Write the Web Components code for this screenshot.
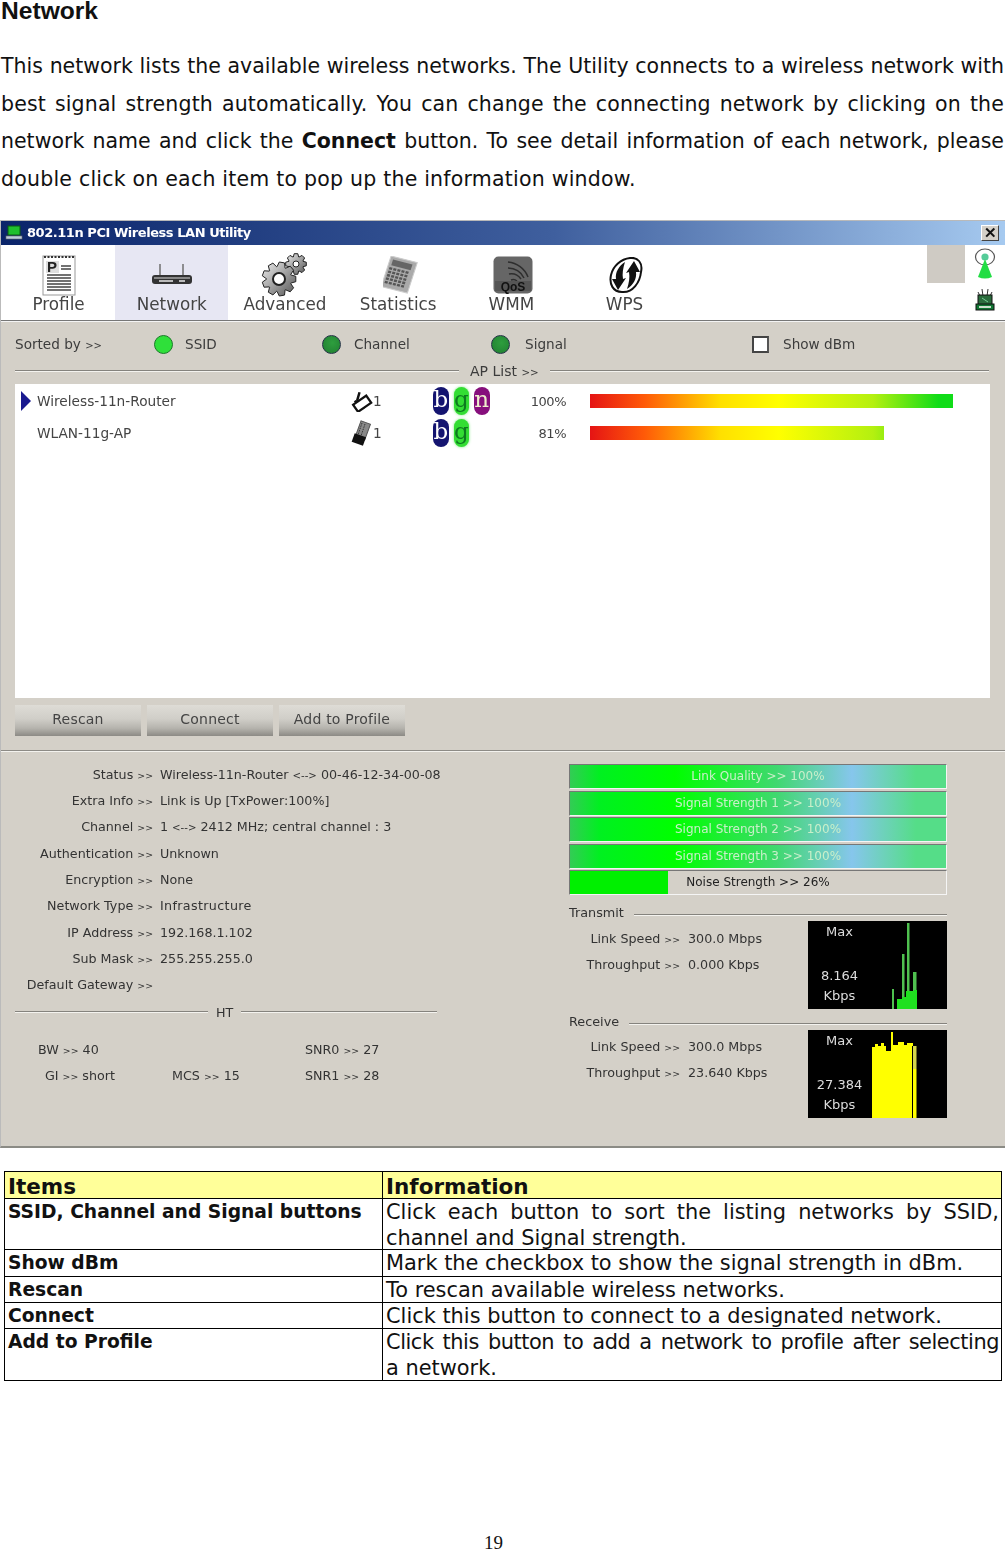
<!DOCTYPE html>
<html lang="en"><head><meta charset="utf-8"><title>Network</title>
<style>html,body{margin:0;padding:0;background:#fff}.g{font-size:.74em}.sm{font-size:.8em}</style>
</head><body>
<script>
const gear=(cx,cy,n,r1,r2)=>{let p=[];for(let i=0;i<n;i++){const a=i/n*Math.PI*2,s=Math.PI/n;
[[a-s*.95,r1],[a-s*.45,r2],[a+s*.45,r2],[a+s*.95,r1]].forEach(([t,r])=>p.push((cx+r*Math.cos(t)).toFixed(1)+','+(cy+r*Math.sin(t)).toFixed(1)));}return p.join(' ');};
const keys=()=>{let s='';for(let r=0;r<5;r++)for(let c=0;c<5;c++)s+=`<rect x="${6+c*4.2}" y="${14+r*3.6}" width="3" height="2.4" fill="#555"/>`;return s;};
const ICONS={
profile:`<svg width="34" height="42" viewBox="0 0 34 42"><rect x="1" y="2" width="32" height="39" fill="#fff" stroke="#999"/><path d="M2 3H32" stroke="#333" stroke-width="2" stroke-dasharray="2 1.5"/><rect x="4" y="7" width="13" height="12" fill="#ddd"/><text x="5" y="18" font-family="Liberation Sans" font-weight="700" font-size="15" fill="#222">P</text><path d="M19 12H29M19 15H29M5 21H29M5 24H29M5 27H29M5 30H29M5 33H29M5 36H29" stroke="#444" stroke-width="1.6"/></svg>`,
network:`<svg width="42" height="24" viewBox="0 0 42 24"><path d="M9 1V14M32 1V14" stroke="#777" stroke-width="1.6"/><rect x="1" y="12" width="40" height="9" rx="3" fill="#333"/><rect x="3" y="14" width="36" height="2" fill="#888"/><rect x="8" y="17" width="14" height="2" fill="#bbb"/><rect x="28" y="17" width="6" height="2" fill="#bbb"/></svg>`,
advanced:`<svg width="50" height="44" viewBox="0 0 50 44"><defs><linearGradient id="gg" x1="0" y1="0" x2="1" y2="1"><stop offset="0" stop-color="#eee"/><stop offset="1" stop-color="#555"/></linearGradient></defs><polygon points="${gear(36,11,8,7.5,10.5)}" fill="url(#gg)" stroke="#222"/><circle cx="36" cy="11" r="3" fill="#fff" stroke="#222"/><polygon points="${gear(19,26,9,12.5,17)}" fill="url(#gg)" stroke="#222"/><circle cx="19" cy="26" r="6" fill="#fff" stroke="#222" stroke-width="2"/></svg>`,
statistics:`<svg width="36" height="38" viewBox="0 0 36 38"><g transform="rotate(14 18 19) skewX(-4)"><rect x="4" y="3" width="27" height="32" fill="#aaa" stroke="#ccc"/><rect x="7" y="6" width="20" height="6" fill="#666"/>${keys()}</g></svg>`,
wmm:`<svg width="40" height="38" viewBox="0 0 40 38"><rect x="0.5" y="0.5" width="39" height="37" rx="5" fill="#666"/><path d="M18 24A6 6 0 0 1 24 25M16 18A12 12 0 0 1 28 23M15 12A18 18 0 0 1 31 22M15 6A24 24 0 0 1 35 21" fill="none" stroke="#2e2e2e" stroke-width="1.5"/><rect x="2" y="25" width="36" height="10" fill="#555"/><text x="20" y="34.5" text-anchor="middle" font-family="Liberation Sans" font-weight="700" font-size="12" fill="#111">QoS</text></svg>`,
wps:`<svg width="34" height="37" viewBox="0 0 34 37"><path d="M21 1C29 0 34 6 32 15C31 25 24 36 13 35C4 35 0 27 2 18C4 9 12 2 21 1Z" fill="#fff" stroke="#111" stroke-width="2"/><path d="M25 4L31 15L27 15C28 22 24 28 18 32C20 26 21 20 20 15L17 16Z" fill="#111"/><path d="M9 33L3 22L7 22C6 15 10 9 16 5C14 11 13 17 14 22L17 21Z" fill="#111"/></svg>`,
antenna:`<svg width="22" height="32" viewBox="0 0 22 32"><ellipse cx="11" cy="9" rx="9.5" ry="8" fill="#fff" stroke="#555" stroke-width="1.2"/><circle cx="11" cy="9" r="3.6" fill="#5c9"/><path d="M11 11L18 29Q11 32 4 29Z" fill="#22dd44"/></svg>`,
ap:`<svg width="20" height="23" viewBox="0 0 20 23"><path d="M3 4L5 8M17 4L15 8M7 1L8 8M13 1L12 8" stroke="#333" fill="none"/><rect x="3" y="7" width="14" height="10" fill="#2a6b3c" stroke="#111"/><path d="M7 10L13 14" stroke="#7c9"/><rect x="1" y="16" width="18" height="6" fill="#173" stroke="#111"/><rect x="4" y="18" width="12" height="2" fill="#cdc"/></svg>`,
app:`<svg width="18" height="18" viewBox="0 0 18 18"><rect x="3" y="2" width="12" height="9" fill="#1fbf2e" stroke="#0a5c12"/><rect x="1" y="12" width="16" height="3" fill="#bcd" stroke="#666" stroke-width=".6"/></svg>`,
router:`<svg width="22" height="21" viewBox="3 0 16 17"><path d="M9 1L7 8M5 8L13 14" fill="none" stroke="#111" stroke-width="2"/><rect x="5" y="7" width="13" height="7" transform="rotate(-35 11 11)" fill="#fff" stroke="#111" stroke-width="1.8"/></svg>`,
card:`<svg width="22" height="26" viewBox="0 0 22 26"><rect x="7" y="2" width="10" height="17" transform="rotate(20 12 10)" fill="#888" stroke="#555"/><path d="M11 3L7 15M14 4L10 16" stroke="#333" stroke-dasharray="1.5 1"/><rect x="2" y="15" width="12" height="9" transform="rotate(20 8 19)" fill="#111"/></svg>`
};
function def(tag,css,html){customElements.define(tag,class extends HTMLElement{
  connectedCallback(){if(this.shadowRoot)return;const r=this.attachShadow({mode:'open'});
  r.innerHTML=`<style>${css}</style>`+(typeof html==='function'?html(this):html);}
});}
const WF=`font-family:"DejaVu Sans",sans-serif;`;
def('net-doc',`:host{display:block;width:1005px;height:1550px;overflow:hidden;position:relative;background:#fff;color:#000}`,`<slot></slot>`);
def('doc-heading',`:host{display:block;height:22px;padding-left:1px;font:700 24.6px/21px "Liberation Sans",sans-serif;color:#111}`,`<slot></slot>`);
def('doc-para',`:host{display:block;margin:26px 0 0 1px;width:1003px;font:20.5px/37.5px "DejaVu Sans",sans-serif;color:#111}`,`<slot></slot>`);
def('just-line',`:host{display:block;white-space:nowrap;text-align:justify;text-align-last:justify}:host([end]){text-align-last:left}`,`<slot></slot>`);
def('util-window',`:host{display:block;margin-top:22px;height:925px;background:#d4d0c8;border-top:1px solid #b9b9b9;border-bottom:2px solid #8b8b85;border-left:1px solid #bbb;${WF}color:#3c3c3c;filter:blur(.3px);font-size:14px;box-sizing:content-box}`,`<slot></slot>`);
def('win-title',`:host{display:flex;align-items:center;height:24px;padding:0 6px 0 4px;gap:4px;background:linear-gradient(90deg,#0a246a,#3f5f9e 55%,#a6caf0);color:#fff;font:700 13px/24px "DejaVu Sans",sans-serif;letter-spacing:-.45px}
 .x{margin-left:auto;width:18px;height:16px;background:#d4d0c8;border:1px solid;border-color:#fff #444 #444 #fff;box-sizing:border-box;color:#111;font:700 15px/14px "Liberation Sans",sans-serif;text-align:center}`,
 `<app-icon name="app"></app-icon><slot></slot><span class="x">✕</span>`);
def('app-icon',`:host{display:inline-flex;align-items:center;justify-content:center;line-height:0}`,e=>ICONS[e.getAttribute('name')]);
def('tool-bar',`:host{display:flex;height:75px;background:#fff;padding-left:1px;border-bottom:1px solid #777;box-shadow:0 1px 0 #f4f4f4}
 .g{margin-left:auto;width:38px;height:38px;background:#cfcbc4}
 .r{width:40px;display:flex;flex-direction:column;align-items:center;padding-top:3px;gap:8px}`,
 `<slot></slot><div class="g"></div><div class="r"><app-icon name="antenna"></app-icon><app-icon name="ap"></app-icon></div>`);
def('tool-tab',`:host{display:block;width:113.2px;text-align:center;color:#444;font:16.8px/20px "DejaVu Sans",sans-serif}
 :host([on]){background:#e7e7f3}
 .i{height:49px;padding:11px 0 0 var(--ix,0);box-sizing:border-box;display:flex;align-items:center;justify-content:center}`,
 e=>`<div class="i"><app-icon name="${e.getAttribute('icon')}"></app-icon></div><slot></slot>`);
def('sort-row',`:host{display:grid;grid-template-columns:139px 31px 137px 32px 137px 34px 227px 31px auto;align-items:center;height:20px;margin:13px 0 0 14px;font-size:13.6px}`,`<slot></slot>`);
def('led-dot',`:host{display:block;width:19px;height:19px;border-radius:50%;background:radial-gradient(circle at 55% 40%,#2e9e3e,#1f7d30);border:1px solid #234;box-sizing:border-box}:host([on]){background:#2fe03a;border-color:#1b7a2a}`,``);
def('check-box',`:host{display:block;width:17px;height:17px;background:#fff;border:2px solid #444;border-right-color:#555;box-sizing:border-box}`,``);
def('rule-line',`:host{display:flex;align-items:center;gap:var(--g,11px);height:var(--h,26px);margin:var(--m,0 16px 0 14px)}
 i{flex:1;height:0;border-top:1px solid #85837e;border-bottom:1px solid #f4f3ef}
 .f{flex:0 0 var(--lw,auto)}`,`<i class="f"></i><slot></slot><i></i>`);
def('ap-list',`:host{display:block;height:313px;background:#fff;margin:0 15px 0 14px;padding-top:1px}`,`<slot></slot>`);
def('ap-row',`:host{display:grid;grid-template-columns:16px 314px 22px 60px 91px 42px 24px 1fr;align-items:center;height:32px;padding-left:6px;font-size:13.7px;color:#444}
 .t{width:0;height:0;border-left:10px solid #1a1a90;border-top:10px solid transparent;border-bottom:10px solid transparent}
 .p{text-align:right;font-size:13px;letter-spacing:-.5px}.b{display:flex;gap:5px}
 .s{height:14px;background:linear-gradient(90deg,#e51414,#ff5a08 15%,#ffe000 36%,#ffff00 52%,#b4f010 78%,#10dc18 96%) 0 0/363px 14px no-repeat;width:var(--w)}`,
 e=>`<span class="t" ${e.hasAttribute('sel')?'':'style="visibility:hidden"'}></span><slot></slot><app-icon name="${e.getAttribute('icon')}"></app-icon><span>1</span><span class="b"><slot name="b"></slot></span><span class="p">${e.getAttribute('pct')}</span><span></span><span class="s" style="--w:${e.getAttribute('w')}px"></span>`);
def('mode-pill',`:host{display:block;width:15.5px;height:28px;border-radius:8px;text-align:center;font:400 23px/24px "DejaVu Serif","DejaVu Sans",serif;color:#fff;background:#141470}
 :host([k=g]){background:#33dd33;color:#0d7a1f;box-shadow:0 0 3px #7be87b}:host([k=n]){background:#860f7c;color:#eec}`,`<slot></slot>`);
def('btn-row',`:host{display:flex;gap:6px;margin:7px 0 0 14px;height:31px}`,`<slot></slot>`);
def('win-btn',`:host{display:block;width:126px;height:31px;text-align:center;font-size:14px;line-height:28px;letter-spacing:.2px;color:#444;background:linear-gradient(#dedcd6,#d0cec8 45%,#b5b3ad 75%,#8c8a85)}`,`<slot></slot>`);
def('pane-rule',`:host{display:block;margin-top:14px;height:0;border-top:1px solid #8d8b86;border-bottom:1px solid #f3f2ee}`,``);
def('lower-pane',`:host{display:grid;grid-template-columns:568px 378px;font-size:12.7px;color:#333}`,`<slot></slot>`);
def('left-col',`:host{display:block;padding-top:9.5px;--m:0 0 0 14px;--lw:193px;--g:8px;--h:27px}`,`<slot></slot>`);
def('kv-row',`:host{display:grid;grid-template-columns:152px 1fr;gap:7px;height:26.35px;line-height:26px;white-space:nowrap;width:450px}.k{text-align:right}.g{font-size:.74em}`,
 e=>`<span class="k">${e.getAttribute('k')} <span class="g">&gt;&gt;</span></span><span><slot></slot></span>`);
def('ht-grid',`:host{display:grid;grid-template-columns:134px 133px 1fr;grid-auto-rows:26.4px;line-height:26px;padding:11px 0 0 37px;white-space:nowrap}`,`<slot></slot>`);
def('right-col',`:host{display:block;padding-top:12px}`,`<slot></slot>`);
def('q-bar',`:host{display:block;height:25px;margin-bottom:1.5px;box-sizing:border-box;border:1px solid;border-color:#777 #f5f5f5 #f5f5f5 #777;text-align:center;font-size:12px;line-height:23px;color:#c9efc9;background:linear-gradient(90deg,#33cc55,#00f020 8%,#00ff00 28%,#40d870 55%,#86c6ec 75%,#55dd88 92%)}
 :host([n]){color:#222;background:linear-gradient(#00f000,#00f000) 0 0/98px 100% no-repeat #d4d0c8}`,`<slot></slot>`);
def('io-sec',`:host{display:grid;grid-template-columns:239px 139px;height:88px}`,`<slot></slot>`);
def('sec-head',`:host{display:flex;align-items:center;gap:10px;height:18px;padding-top:var(--st,0);font-size:12.8px}i{flex:1;border-top:1px solid #85837e;border-bottom:1px solid #f4f3ef;margin-top:5px}`,`<slot></slot><i></i>`);
def('speed-rows',`:host{display:block;padding-top:4px}`,`<slot></slot>`);
def('speed-row',`:host{display:grid;grid-template-columns:111px 1fr;gap:8px;height:26px;line-height:26px;white-space:nowrap}.k{text-align:right}.g{font-size:.74em}`,
 e=>`<span class="k">${e.getAttribute('k')} <span class="g">&gt;&gt;</span></span><span><slot></slot></span>`);
def('speed-chart',`:host{display:block;position:relative;width:139px;height:88px;background:#000;color:#ddd;font-size:13px;line-height:21px}
 svg{position:absolute;left:0;top:0}
 .t{position:absolute;left:0;width:63px;text-align:center}`,
 e=>{const k=e.getAttribute('kind');const g=k==='tx'
 ?`<path d="M99 2h2.5v86H99zM94 33h2.5v55H94zM84 68h2v20h-2zM105 51h3.5v37H105z" fill="#4fc04f"/><path d="M89 78h5v-2h4v-6h8v-1h3v19H89z" fill="#1fe01f"/>`
 :`<path d="M64 88V17h3v-3h3v2h3v-3h3v3h2v5h5V2h2v13h5v-3h6v3h3v-2h6v3h3v24h-3V16h-1v72z" fill="#ff0"/><path d="M105 16h3.5v23H105z" fill="#d6d64a"/><path d="M105 39h3.5v49H105z" fill="#ff0"/>`;
 return `<svg width="139" height="88">${g}</svg><span class="t" style="top:0">Max</span><span class="t" style="top:44px"><slot></slot></span><span class="t" style="top:64px">Kbps</span>`;});
def('info-table',`:host{display:block;margin:23px 3px 0 4px;border:1px solid #000;border-bottom:0;font:20.9px/26px "DejaVu Sans",sans-serif;color:#111}`,`<slot></slot>`);
def('info-row',`:host{display:grid;box-sizing:border-box;grid-template-columns:378px 1fr;border-bottom:1px solid #000;height:var(--rh,26px)}
 .a{font-weight:700;font-size:18.7px;line-height:22px;padding:2px 0 0 3px;border-right:1px solid #000;box-sizing:border-box}
 .b{padding:0 2px 0 3px;line-height:26px;min-width:0}
 :host([head]) {background:#ffff99;--rh:27px}:host([head]) .a,:host([head]) .b{font-weight:700;font-size:21.5px;line-height:27px;padding-top:1px}`,
 `<div class="a"><slot name="i"></slot></div><div class="b"><slot></slot></div>`);
def('page-num',`:host{display:block;position:absolute;left:0;right:0;top:1531px;text-align:center;font:19px/24px "Liberation Serif",serif;color:#111;transform:translateX(-9px)}`,`<slot></slot>`);
</script>

<net-doc>
<doc-heading>Network</doc-heading>
<doc-para>
<just-line>This network lists the available wireless networks. The Utility connects to a wireless network with</just-line>
<just-line style="letter-spacing:.15px">best signal strength automatically. You can change the connecting network by clicking on the</just-line>
<just-line>network name and click the <b>Connect</b> button. To see detail information of each network, please</just-line>
<just-line end style="letter-spacing:.22px">double click on each item to pop up the information window.</just-line>
</doc-para>

<util-window>
 <win-title>802.11n PCI Wireless LAN Utility</win-title>
 <tool-bar>
  <tool-tab icon="profile">Profile</tool-tab><tool-tab icon="network" on>Network</tool-tab><tool-tab icon="advanced">Advanced</tool-tab><tool-tab icon="statistics" style="--ix:6px">Statistics</tool-tab><tool-tab icon="wmm" style="--ix:3px">WMM</tool-tab><tool-tab icon="wps" style="--ix:3px">WPS</tool-tab>
 </tool-bar>
 <sort-row><span>Sorted by <span class="g">&gt;&gt;</span></span><led-dot on></led-dot><span>SSID</span><led-dot></led-dot><span>Channel</span><led-dot></led-dot><span>Signal</span><check-box></check-box><span>Show dBm</span></sort-row>
 <rule-line style="--lw:444px;margin-top:4px"><span>AP List <span class="g">&gt;&gt;</span></span></rule-line>
 <ap-list>
  <ap-row sel icon="router" pct="100%" w="363">Wireless-11n-Router<mode-pill slot="b" k="b">b</mode-pill><mode-pill slot="b" k="g">g</mode-pill><mode-pill slot="b" k="n">n</mode-pill></ap-row>
  <ap-row icon="card" pct="81%" w="294">WLAN-11g-AP<mode-pill slot="b" k="b">b</mode-pill><mode-pill slot="b" k="g">g</mode-pill></ap-row>
 </ap-list>
 <btn-row><win-btn>Rescan</win-btn><win-btn>Connect</win-btn><win-btn>Add to Profile</win-btn></btn-row>
 <pane-rule></pane-rule>
 <lower-pane>
  <left-col>
   <kv-row k="Status">Wireless-11n-Router <span class="sm">&lt;--&gt;</span> 00-46-12-34-00-08</kv-row>
   <kv-row k="Extra Info">Link is Up  [TxPower:100%]</kv-row>
   <kv-row k="Channel">1 <span class="sm">&lt;--&gt;</span> 2412 MHz; central channel : 3</kv-row>
   <kv-row k="Authentication">Unknown</kv-row>
   <kv-row k="Encryption">None</kv-row>
   <kv-row k="Network Type"><span style="letter-spacing:.35px">Infrastructure</span></kv-row>
   <kv-row k="IP Address">192.168.1.102</kv-row>
   <kv-row k="Sub Mask">255.255.255.0</kv-row>
   <kv-row k="Default Gateway"></kv-row>
   <rule-line style="width:422px"><span>HT</span></rule-line>
   <ht-grid><span>BW <span class="g">&gt;&gt;</span> 40</span><span></span><span>SNR0 <span class="g">&gt;&gt;</span> 27</span><span style="padding-left:7px">GI <span class="g">&gt;&gt;</span> short</span><span>MCS <span class="g">&gt;&gt;</span> 15</span><span>SNR1 <span class="g">&gt;&gt;</span> 28</span></ht-grid>
  </left-col>
  <right-col>
   <q-bar>Link Quality &gt;&gt; 100%</q-bar><q-bar>Signal Strength 1 &gt;&gt; 100%</q-bar><q-bar>Signal Strength 2 &gt;&gt; 100%</q-bar><q-bar>Signal Strength 3 &gt;&gt; 100%</q-bar><q-bar n>Noise Strength &gt;&gt; 26%</q-bar>
   <sec-head style="--st:6.5px">Transmit</sec-head>
   <io-sec><speed-rows style="padding-top:5px"><speed-row k="Link Speed">300.0 Mbps</speed-row><speed-row k="Throughput">0.000 Kbps</speed-row></speed-rows><speed-chart kind="tx">8.164</speed-chart></io-sec>
   <sec-head style="--st:3px">Receive</sec-head>
   <io-sec><speed-rows><speed-row k="Link Speed">300.0 Mbps</speed-row><speed-row k="Throughput">23.640 Kbps</speed-row></speed-rows><speed-chart kind="rx">27.384</speed-chart></io-sec>
  </right-col>
 </lower-pane>
</util-window>

<info-table>
 <info-row head><span slot="i">Items</span>Information</info-row>
 <info-row style="--rh:51px"><span slot="i">SSID, Channel and Signal buttons</span><just-line>Click each button to sort the listing networks by SSID,</just-line><just-line end>channel and Signal strength.</just-line></info-row>
 <info-row style="--rh:27px"><span slot="i">Show dBm</span>Mark the checkbox to show the signal strength in dBm.</info-row>
 <info-row><span slot="i">Rescan</span>To rescan available wireless networks.</info-row>
 <info-row><span slot="i">Connect</span>Click this button to connect to a designated network.</info-row>
 <info-row style="--rh:52px"><span slot="i">Add to Profile</span><just-line style="letter-spacing:-.45px">Click this button to add a network to profile after selecting</just-line><just-line end>a network.</just-line></info-row>
</info-table>
<page-num>19</page-num>
</net-doc>
</body></html>
